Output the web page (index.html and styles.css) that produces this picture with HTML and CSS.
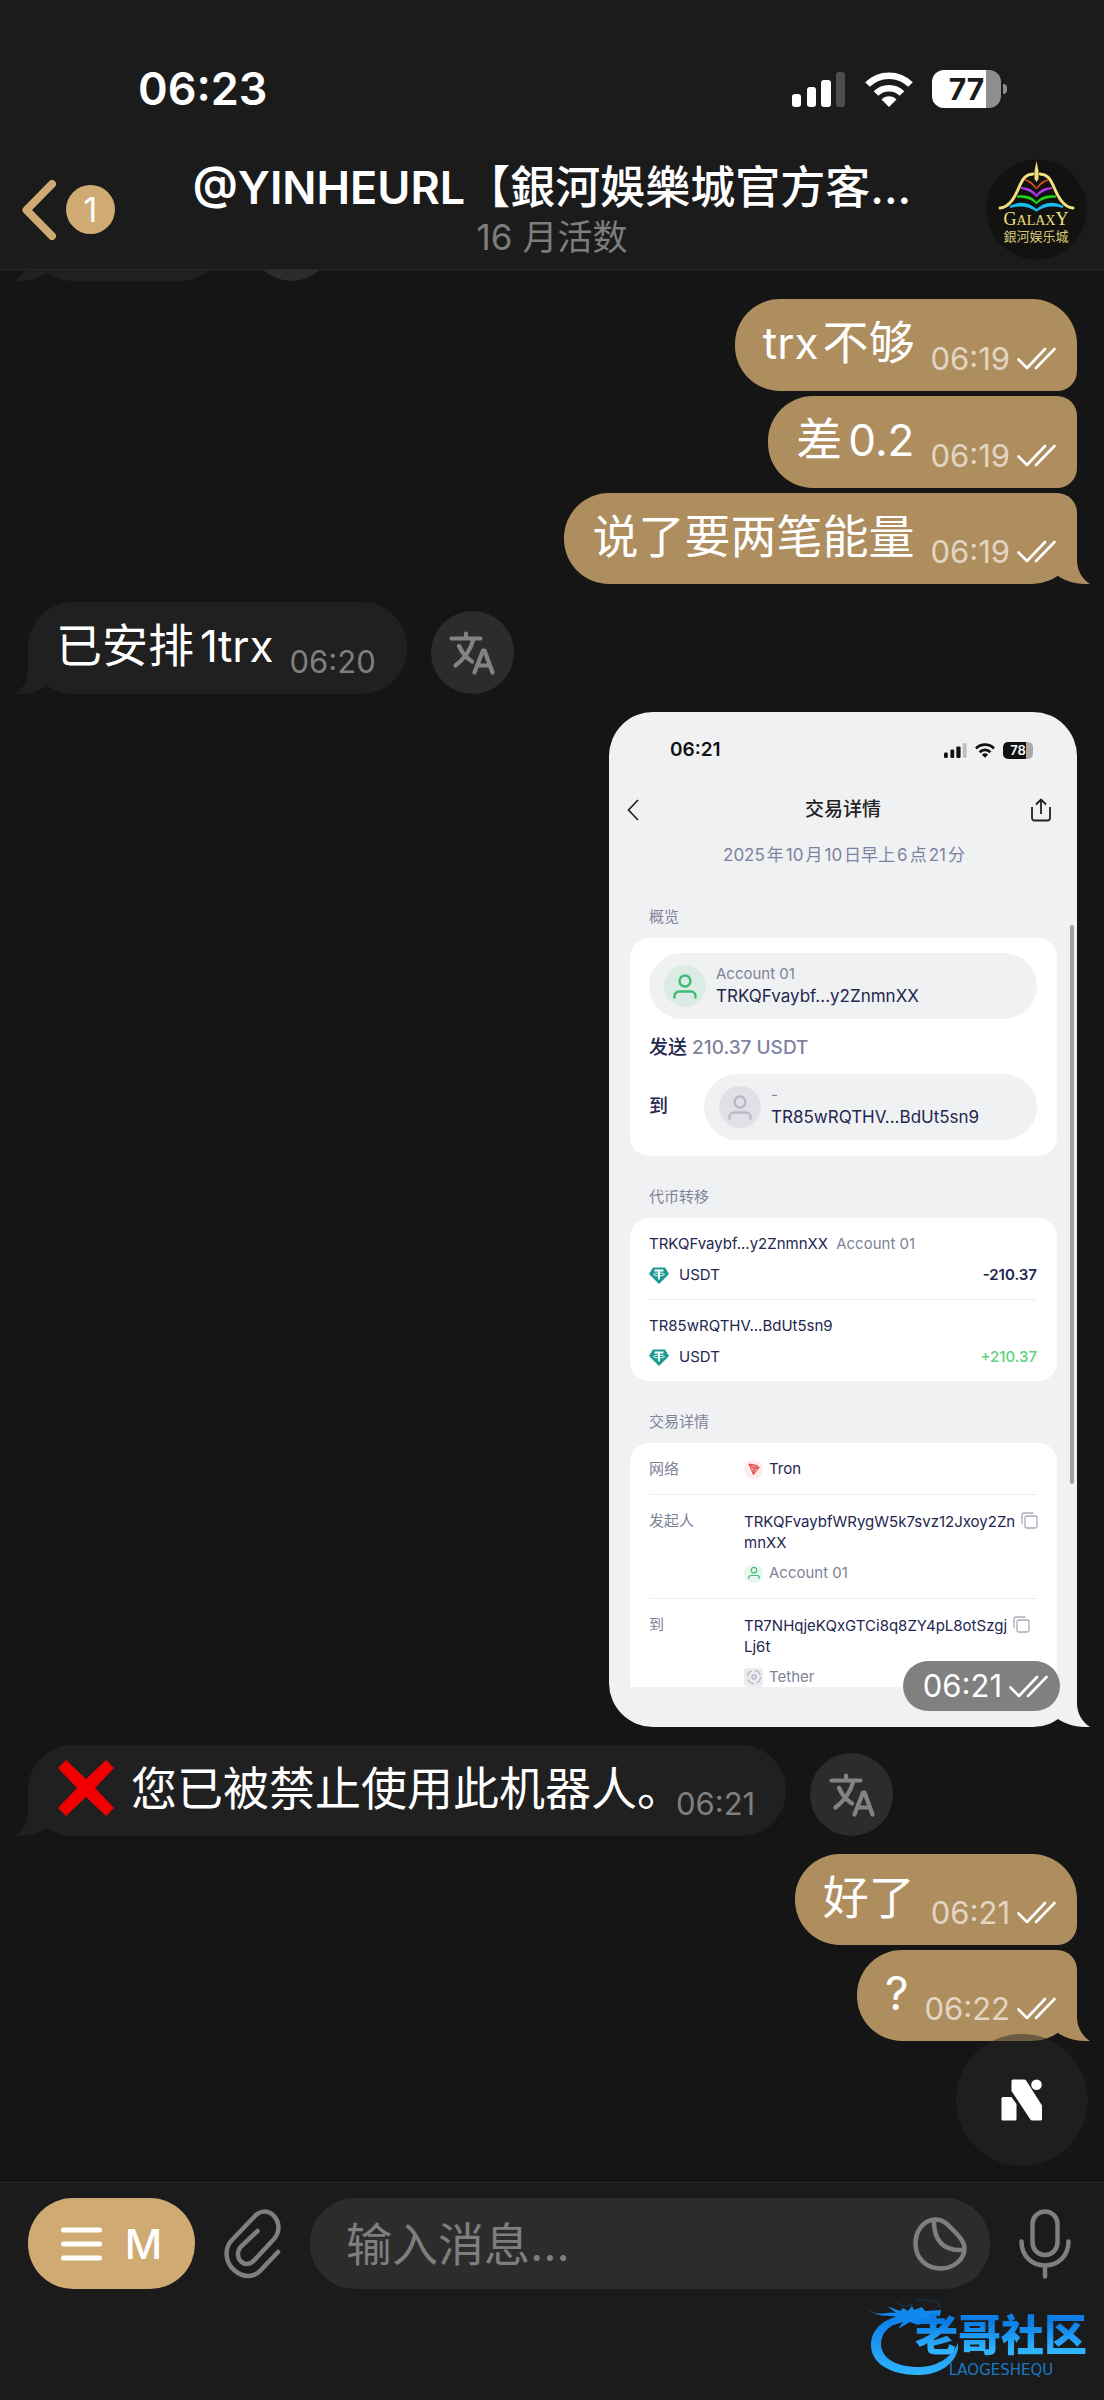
FILE: index.html
```html
<!DOCTYPE html>
<html lang="zh-CN">
  <head>
    <meta charset="UTF-8" />
    <meta name="viewport" content="width=device-width, initial-scale=1.0" />
    <title>Chat</title>
    <link rel="stylesheet" href="styles.css">
  </head>
  <body>
    <!-- shared shapes -->
    <svg class="defs" aria-hidden="true">
      <symbol id="checks" viewBox="0 0 39 23">
        <path d="M1.500 12.500L10 21L28 2M19 21L37.500 2" fill="none" stroke="currentColor" stroke-width="2.600" stroke-linecap="round" stroke-linejoin="round" />
      </symbol>
      <symbol id="tail" viewBox="0 0 46 46">
        <path d="M33 0V22C33 32 38 41 46 46C32 46.500 21 43 14 38L10 10Z" fill="currentColor" />
      </symbol>
      <symbol id="signal" viewBox="0 0 54 35">
        <rect x="0" y="22" width="9" height="13" rx="3" fill="currentColor" />
        <rect x="15" y="15" width="9" height="20" rx="3" fill="currentColor" />
        <rect x="29" y="8" width="10" height="27" rx="3" fill="currentColor" />
        <rect x="44" y="0" width="9" height="35" rx="3" fill="currentColor" opacity="0.220" />
      </symbol>
      <symbol id="wifi" viewBox="0 0 48 35">
        <path d="M24 35L16.500 27.500A10.500 10.500 0 0 1 31.500 27.500Z" fill="currentColor" />
        <path d="M11 21.500A18.500 18.500 0 0 1 37 21.500" fill="none" stroke="currentColor" stroke-width="6.500" />
        <path d="M2.500 12.500A30.500 30.500 0 0 1 45.500 12.500" fill="none" stroke="currentColor" stroke-width="6.500" />
      </symbol>
      <symbol id="translate" viewBox="0 0 46 44">
        <g fill="none" stroke="currentColor" stroke-width="4.200" stroke-linecap="round" stroke-linejoin="round">
          <path d="M2.500 7.500H31.500M17 2.500V7M24.500 8C21.500 19 15 28 6.500 34.500M10 15C13 21.500 17.500 27 23 30.500" />
          <path d="M25.500 41.500L34 19.500H35.500L43.500 41.500M28.500 34.500H41" />
        </g>
      </symbol>
      <symbol id="person" viewBox="0 0 24 24">
        <circle cx="12" cy="6.500" r="5.500" fill="none" stroke="currentColor" stroke-width="2.400" />
        <path d="M1.500 23V21.500A4.500 4.500 0 0 1 6 17H18A4.500 4.500 0 0 1 22.500 21.500V23" fill="none" stroke="currentColor" stroke-width="2.400" stroke-linecap="round" />
      </symbol>
      <symbol id="usdt" viewBox="0 0 20 17">
        <path d="M4 0.500H16L20 7L10 17L0 7Z" fill="#1a9a90" />
        <path d="M5.500 3.500H14.500M10 3.500V12.500" stroke="#fff" stroke-width="1.900" fill="none" />
        <ellipse cx="10" cy="7.500" rx="5.500" ry="1.400" fill="none" stroke="#fff" stroke-width="0.900" />
      </symbol>
      <symbol id="copy" viewBox="0 0 17 17">
        <g fill="none" stroke="currentColor" stroke-width="1.300">
          <rect x="4" y="4" width="12" height="12" rx="2" />
          <path d="M1 12V3A2 2 0 0 1 3 1H12.500" />
        </g>
      </symbol>
    </svg>

    <header class="top">
      <div class="status">
        <span class="clock">06:23</span>
        <div class="status-icons">
          <svg class="ic-signal"><use href="#signal" /></svg>
          <svg class="ic-wifi"><use href="#wifi" /></svg>
          <span class="battery">77</span>
        </div>
      </div>
      <div class="nav">
        <button class="back" type="button" aria-label="Back">
          <svg width="34" height="60" viewBox="0 0 34 60"><path d="M30 4L4.500 30L30 56" fill="none" stroke="#cfab73" stroke-width="8" stroke-linecap="round" stroke-linejoin="round" /></svg>
          <span class="unread">1</span>
        </button>
        <div class="title">
          <h1><span class="latin">@YINHEURL</span>【銀河娛樂城官方客...</h1>
          <p>16 月活数</p>
        </div>
        <a class="avatar" href="#profile" aria-label="Profile">
          <svg width="101" height="101" viewBox="0 0 101 101">
            <circle cx="50.500" cy="50.500" r="50" fill="#121211" />
            <path d="M50.500 2L52.500 12V20L50.500 23L48.500 20V12Z" fill="#f4e07c" />
            <path d="M14 49C24 48 29 38 34 26C37 19 40 15.500 47 15M87 49C77 48 72 38 67 26C64 19 61 15.500 54 15" fill="none" stroke="#f4e07c" stroke-width="3" stroke-linecap="round" />
            <path d="M50.500 30C48 25 45 22 39 21C44 23 47 26 50.500 30C54 26 57 23 62 21C56 22 53 25 50.500 30Z" fill="#ee4d14" stroke="#ee4d14" stroke-width="1" />
            <path d="M50.500 37C47 31 42 29 35 29C42 30.500 46 32 50.500 37C55 32 59 30.500 66 29C59 29 54 31 50.500 37Z" fill="#b73cf0" stroke="#b73cf0" stroke-width="1.600" />
            <path d="M50.500 44C46 38 40 36 31 37.500C40 38 45 39 50.500 44C56 39 61 38 70 37.500C61 36 55 38 50.500 44Z" fill="#22d418" stroke="#22d418" stroke-width="1.800" />
            <path d="M50.500 51.500C44 45 35 42 24 48C35 45 43 46 50.500 51.500C58 46 66 45 77 48C66 42 57 45 50.500 51.500Z" fill="#19bdf2" stroke="#19bdf2" stroke-width="2" />
            <text class="brand" x="50" y="66" text-anchor="middle"><tspan class="brand-cap">G</tspan>ALAX<tspan class="brand-cap">Y</tspan></text>
            <text class="brand-cn" x="50" y="82" text-anchor="middle">銀河娱乐城</text>
          </svg>
        </a>
      </div>
    </header>

    <main class="chat">
      <div class="row in">
        <div class="bubble older"><svg class="tail"><use href="#tail" /></svg></div>
        <span class="translate"></span>
      </div>

      <div class="group">
        <div class="bubble out first"><p><span class="latin">trx</span>不够</p><time>06:19</time><svg class="checks"><use href="#checks" /></svg></div>
        <div class="bubble out mid"><p>差<span class="latin">0.2</span></p><time>06:19</time><svg class="checks"><use href="#checks" /></svg></div>
        <div class="bubble out last"><p>说了要两笔能量</p><time>06:19</time><svg class="checks"><use href="#checks" /></svg><svg class="tail"><use href="#tail" /></svg></div>
      </div>

      <div class="row in">
        <div class="bubble"><p>已安排<span class="latin">1trx</span></p><time>06:20</time><svg class="tail"><use href="#tail" /></svg></div>
        <button class="translate" type="button" aria-label="Translate"><svg width="46" height="44"><use href="#translate" /></svg></button>
      </div>

      <div class="photo">
        <svg class="tail"><use href="#tail" /></svg>
        <section class="receipt">
          <div class="r-status">
            <span>06:21</span>
            <div class="r-icons">
              <svg width="23" height="15"><use href="#signal" /></svg>
              <svg width="20" height="15"><use href="#wifi" /></svg>
              <span class="r-battery">78</span>
            </div>
          </div>
          <div class="r-nav">
            <svg width="28" height="22" viewBox="0 0 28 22"><path d="M11 1L1.500 11L11 21" fill="none" stroke="#222" stroke-width="1.700" /></svg>
            <h2>交易详情</h2>
            <svg width="28" height="24" viewBox="0 0 28 24"><path d="M1 9V20A2.500 2.500 0 0 0 3.500 22.500H16.500A2.500 2.500 0 0 0 19 20V9M10 16V2M5 6.500L10 1.500L15 6.500" fill="none" stroke="#222" stroke-width="1.800" /></svg>
          </div>
          <p class="r-date"><span>2025</span>年<span>10</span>月<span>10</span>日早上<span>6</span>点<span>21</span>分</p>

          <h3>概览</h3>
          <div class="card overview">
            <div class="account">
              <span class="face green"><svg width="24" height="25"><use href="#person" /></svg></span>
              <div><small>Account 01</small><b>TRKQFvaybf...y2ZnmnXX</b></div>
            </div>
            <p class="sent">发送 <span>210.37 USDT</span></p>
            <div class="to">
              <span>到</span>
              <div class="account">
                <span class="face"><svg width="24" height="25"><use href="#person" /></svg></span>
                <div><small>-</small><b>TR85wRQTHV...BdUt5sn9</b></div>
              </div>
            </div>
          </div>

          <h3>代币转移</h3>
          <div class="card">
            <div class="transfer">
              <p>TRKQFvaybf...y2ZnmnXX <small>Account 01</small></p>
              <div class="coin"><svg width="20" height="17"><use href="#usdt" /></svg>USDT<b>-210.37</b></div>
            </div>
            <div class="transfer">
              <p>TR85wRQTHV...BdUt5sn9</p>
              <div class="coin"><svg width="20" height="17"><use href="#usdt" /></svg>USDT<b class="plus">+210.37</b></div>
            </div>
          </div>

          <h3>交易详情</h3>
          <dl class="card details">
            <div class="detail">
              <dt>网络</dt>
              <dd>
                <div class="tag dark">
                  <span class="dot red"><svg width="12" height="12" viewBox="0 0 12 12"><path d="M1 1L9 2.500L11 4.500L5.500 11.500ZM1 1L6.200 5.200L5.500 11.500M6.200 5.200L11 4.500M6.200 5.200L9 2.500" fill="#f2a0a0" stroke="#e2403e" stroke-width="1" stroke-linejoin="round" /></svg></span>
                  Tron
                </div>
              </dd>
            </div>
            <div class="detail">
              <dt>发起人</dt>
              <dd>
                <div class="addr"><span>TRKQFvaybfWRygW5k7svz12Jxoy2Zn<br>mnXX</span><svg width="17" height="17"><use href="#copy" /></svg></div>
                <div class="tag"><span class="dot mint"><svg width="12" height="12"><use href="#person" /></svg></span>Account 01</div>
              </dd>
            </div>
            <div class="detail">
              <dt>到</dt>
              <dd>
                <div class="addr"><span>TR7NHqjeKQxGTCi8q8ZY4pL8otSzgj<br>Lj6t</span><svg width="17" height="17"><use href="#copy" /></svg></div>
                <div class="tag">
                  <span class="dot square"><svg width="16" height="16" viewBox="0 0 16 16"><circle cx="8" cy="8" r="6.500" fill="none" stroke="#b4b5c1" stroke-width="1.300" stroke-dasharray="7.200 3" /><circle cx="8" cy="8" r="2" fill="none" stroke="#b4b5c1" stroke-width="1.500" /></svg></span>
                  Tether
                </div>
              </dd>
            </div>
          </dl>
          <span class="scrollbar"></span>
        </section>
        <div class="stamp"><time>06:21</time><svg class="checks"><use href="#checks" /></svg></div>
      </div>

      <div class="row in">
        <div class="bubble">
          <svg class="cross" viewBox="0 0 56 56"><path d="M8 0L28 19L48 0L56 8L37 28L56 48L48 56L28 37L8 56L0 48L19 28L0 8Z" fill="#f20000" /></svg>
          <p>您已被禁止使用此机器人<span class="stop">。</span></p><time>06:21</time><svg class="tail"><use href="#tail" /></svg>
        </div>
        <button class="translate" type="button" aria-label="Translate"><svg width="46" height="44"><use href="#translate" /></svg></button>
      </div>

      <div class="group">
        <div class="bubble out first"><p>好了</p><time>06:21</time><svg class="checks"><use href="#checks" /></svg></div>
        <div class="bubble out last"><p>?</p><time>06:22</time><svg class="checks"><use href="#checks" /></svg><svg class="tail"><use href="#tail" /></svg></div>
      </div>

      <button class="float" type="button" aria-label="Open assistant">
        <svg width="42" height="42" viewBox="0 0 42 42" fill="#fff">
          <path d="M2 18H10.500L15.500 25V40Q15.500 41.500 14 41.500H2Q0.500 41.500 0.500 40V19.500Q0.500 18 2 18Z" />
          <path d="M12 0.500H23Q24.500 0.500 25.300 1.800L41 26.500V40Q41 41.500 39.500 41.500H31.500Q30 41.500 29.200 40.300L10.500 12V2Q10.500 0.500 12 0.500Z" />
          <circle cx="35.500" cy="5.800" r="5.300" />
        </svg>
      </button>
    </main>

    <footer class="bottom">
      <form class="composer">
        <button class="menu" type="button">
          <svg width="41" height="34" viewBox="0 0 41 34"><path d="M2.500 3H38.500M2.500 17H38.500M2.500 31H38.500" stroke="#fff" stroke-width="5" stroke-linecap="round" /></svg>
          M
        </button>
        <button class="icon" type="button" aria-label="Attach">
          <svg width="57" height="70" viewBox="0 0 57 70"><path d="M54 43L37 61C30 69 19 69 10 61C1 53 0 39 8 31L30 8C36 1 44 1 50 7C56 14 56 23 50 30L30.500 51C26 56 20 56 16.500 52C13 48 13 42 17 37.500L33.500 22" fill="none" stroke="currentColor" stroke-width="4.500" stroke-linecap="round" /></svg>
        </button>
        <div class="field">
          <input type="text" placeholder="输入消息..." aria-label="输入消息" />
          <button class="icon" type="button" aria-label="Stickers">
            <svg width="54" height="54" viewBox="0 0 54 54"><path d="M21 2.500C10 4 2.500 14 2.500 26.500C2.500 41 13 51.500 27.500 51.500C41 51.500 51.500 42 51.500 31C51.500 26 49 22.500 44 17L34 7C30 3.500 26 2 21 2.500ZM21 3C20.500 22 29 34.500 51 33" fill="none" stroke="currentColor" stroke-width="4.500" stroke-linejoin="round" /></svg>
          </button>
        </div>
        <button class="icon" type="button" aria-label="Voice message">
          <svg width="52" height="70" viewBox="0 0 52 70"><path d="M26 2.500A12.500 12.500 0 0 1 38.500 15V33.500A12.500 12.500 0 0 1 13.500 33.500V15A12.500 12.500 0 0 1 26 2.500ZM2.500 32.500C2.500 47 13 56.500 26 56.500C39 56.500 49.500 47 49.500 32.500M26 57V67.500" fill="none" stroke="currentColor" stroke-width="4.500" stroke-linecap="round" /></svg>
        </button>
      </form>

      <a class="community" href="#community">
        <svg width="92" height="80" viewBox="0 0 92 80">
          <defs>
            <linearGradient id="blue" x1="0" y1="0" x2="0" y2="1"><stop offset="0" stop-color="#0c7de6" /><stop offset="1" stop-color="#2fb4ff" /></linearGradient>
          </defs>
          <path d="M36 17C14 20 2 32 2 47C2 65 21 77 49 77C70 77 86 66 89 51V45C82 60 68 69 50 69C27 69 12 60 12 46C12 34 21 26 38 22Z" fill="url(#blue)" />
          <path d="M0 12L6 15C15 17 20 13 27 15L18 8L31 13L34 10L39 13L43 8L45 12L53 9L56 13L72 12L71 18L60 17L69 22L68 27L57 23L49 27L41 24L29 31L34 24L25 27L31 20C22 16 12 21 0 12Z" fill="#0f87ec" />
          <path d="M28 4C32 9 38 9 44 6M47 2C58 2 70 1 72 11" fill="none" stroke="#134064" stroke-width="1.500" opacity="0.500" />
        </svg>
        <span class="names"><strong>老哥社区</strong><small>LAOGESHEQU</small></span>
      </a>
    </footer>
  </body>
</html>
```

FILE: styles.css
```css
* {
  box-sizing: border-box;
}

body {
  display: flex;
  flex-direction: column;
  height: 100vh;
  margin: 0;
  background-color: #151515;
  color: #fff;
  font-family: Inter, "Noto Sans CJK SC", sans-serif;
}

h1,
h2,
h3,
p,
dl,
dd {
  margin: 0;
}

button {
  padding: 0;
  border: none;
  background: none;
  color: inherit;
  font-family: inherit;
  cursor: pointer;
}

svg {
  display: block;
  flex: none;
}

.defs {
  position: absolute;
  width: 0;
  height: 0;
}

/* header */
.top {
  background-color: #1b1b1b;
  border-bottom: 1px solid #272727;
  padding-bottom: 9px;
}

.status {
  display: flex;
  justify-content: space-between;
  align-items: center;
  padding: 62px 103px 0 138px;
}

.clock {
  font-size: 45px;
  line-height: 54px;
  font-weight: 600;
}

.status-icons {
  display: flex;
  align-items: center;
  gap: 19px;
}

.ic-signal {
  width: 54px;
  height: 35px;
}

.ic-wifi {
  width: 48px;
  height: 35px;
}

.battery {
  position: relative;
  width: 69px;
  border-radius: 12px;
  background: linear-gradient(to right, #fff 78%, #8e8e8e 78%);
  color: #1b1b1b;
  font-size: 30px;
  line-height: 38px;
  font-weight: 700;
  text-align: center;
}

.battery::after {
  content: "";
  position: absolute;
  top: 14px;
  right: -6px;
  width: 4px;
  height: 10px;
  border-radius: 0 4px 4px 0;
  background-color: #8e8e8e;
}

.nav {
  display: grid;
  grid-template-columns: 101px minmax(0, 1fr) 101px;
  align-items: center;
  margin-top: 43px;
  padding: 0 17px;
}

.back {
  display: flex;
  align-items: center;
  gap: 10px;
  padding-left: 5px;
}

.unread {
  width: 49px;
  border-radius: 50%;
  background-color: #cfab73;
  font-size: 34px;
  line-height: 49px;
}

.title {
  text-align: center;
  white-space: nowrap;
}

.title h1 {
  font-size: 45px;
  line-height: 54px;
  font-weight: 500;
}

.title h1 .latin {
  font-weight: 600;
}

.title p {
  color: #7d7d7d;
  font-size: 35px;
  line-height: 44px;
}

.brand {
  font: 14px "Liberation Serif", serif;
  fill: #f4e07c;
}

.brand-cap {
  font-size: 18px;
}

.brand-cn {
  font: 13px "Noto Sans CJK SC", sans-serif;
  fill: #d9c872;
}

/* messages */
.chat {
  position: relative;
  flex: 1;
  min-height: 0;
  display: flex;
  flex-direction: column;
  justify-content: flex-end;
  gap: 18px;
  padding: 0 27px 141px 28px;
  overflow: hidden;
}

.row {
  display: flex;
  align-items: flex-end;
  gap: 24px;
}

.group {
  display: flex;
  flex-direction: column;
  align-items: flex-end;
  gap: 5px;
}

.bubble {
  position: relative;
  display: flex;
  align-items: flex-end;
  padding: 15px 31px 14px 28px;
  border-radius: 45px;
  background-color: #202020;
  white-space: nowrap;
}

.bubble p {
  margin: 0 16px 6px 0;
  font-size: 46px;
  line-height: 56px;
}

.bubble .latin {
  font-size: 44px;
}

.bubble .latin:first-child:not(:only-child),
.out.first .latin {
  margin-right: 4px;
}

.out.mid .latin,
.in .latin {
  margin-left: 6px;
}

.bubble time {
  color: #7f7f7f;
  font-size: 31px;
  line-height: 36px;
}

.bubble.older {
  width: 198px;
  height: 91px;
}

.out {
  padding-right: 21px;
  background-color: #ae8e5f;
}

.out time {
  color: #e2d5c2;
}

.out.first {
  border-radius: 45px 45px 20px 45px;
}

.out.mid {
  border-radius: 45px 20px 20px 45px;
}

.out.last {
  border-radius: 45px 20px 45px 45px;
}

.checks {
  width: 39px;
  height: 23px;
  margin: 0 0 7px 7px;
  color: #fff;
}

.tail {
  position: absolute;
  right: -13px;
  bottom: 0;
  width: 46px;
  height: 46px;
  color: #ae8e5f;
}

.in .tail {
  right: auto;
  left: -13px;
  color: #202020;
  transform: scaleX(-1);
}

.cross {
  width: 56px;
  height: 56px;
  margin: 0 17px 6px 2px;
}

.stop {
  font-feature-settings: "halt";
}

.translate {
  display: grid;
  place-items: center;
  width: 83px;
  height: 83px;
  border-radius: 50%;
  background-color: #2c2c2c;
  color: #838383;
}

/* receipt picture */
.photo {
  position: relative;
  align-self: flex-end;
  width: 100%;
  max-width: 468px;
}

.photo .tail {
  color: #f0f1f3;
}

.receipt {
  position: relative;
  padding-bottom: 40px;
  border-radius: 44px;
  background-color: #f0f1f3;
  color: #23264f;
  font-size: 15px;
  line-height: 20px;
}

.r-status {
  display: flex;
  justify-content: space-between;
  padding: 26px 44px 0 61px;
  color: #111;
  font-size: 19px;
  line-height: 24px;
  font-weight: 600;
}

.r-icons {
  display: flex;
  align-items: center;
  gap: 8px;
}

.r-battery {
  width: 30px;
  border-radius: 5px;
  background: linear-gradient(to right, #111 78%, #aaa 78%);
  color: #fff;
  font-size: 13px;
  line-height: 17px;
  text-align: center;
}

.r-nav {
  display: flex;
  justify-content: space-between;
  align-items: center;
  margin-top: 34px;
  padding: 0 18px;
}

.r-nav h2 {
  color: #222;
  font-size: 19px;
  line-height: 28px;
  font-weight: 500;
}

.r-date {
  margin-top: 21px;
  color: #7e82a0;
  font-size: 17px;
  text-align: center;
}

.r-date span {
  margin: 0 2px;
}

.receipt h3 {
  margin: 31px 40px 11px;
  color: #7f8299;
  font-size: 15px;
  font-weight: 400;
}

.receipt .r-date + h3 {
  margin-top: 42px;
}

.receipt small {
  color: #7f8299;
  font-size: 15px;
}

.card {
  margin: 0 20px 0 21px;
  padding: 0 20px 0 19px;
  border-radius: 19px;
  background-color: #fff;
}

.overview {
  padding-top: 15px;
  padding-bottom: 16px;
}

.account {
  flex: 1;
  display: flex;
  align-items: center;
  gap: 10px;
  height: 66px;
  padding: 0 15px;
  border-radius: 33px;
  background-color: #f0f1f3;
}

.account small,
.account b {
  display: block;
}

.account b {
  font-size: 17px;
  line-height: 24px;
  font-weight: 400;
}

.face {
  display: grid;
  place-items: center;
  width: 42px;
  height: 42px;
  border-radius: 50%;
  background-color: #e0e1e7;
  color: #b9bac7;
}

.face.green {
  background-color: #dcece4;
  color: #3dbb74;
}

.sent {
  margin: 15px 0 12px;
  font-size: 19px;
  line-height: 28px;
  font-weight: 500;
}

.sent span {
  color: #7f82a0;
}

.to {
  display: flex;
  align-items: center;
  gap: 36px;
  font-size: 19px;
  font-weight: 500;
}

.to .account {
  font-weight: 400;
}

.transfer {
  padding: 16px 0 14px;
}

.transfer + .transfer {
  border-top: 1px solid #ededf1;
}

.transfer small {
  margin-left: 4px;
}

.coin {
  display: flex;
  align-items: center;
  gap: 10px;
  margin-top: 11px;
}

.coin b {
  margin-left: auto;
  font-weight: 600;
}

.coin .plus {
  color: #5fd17c;
  font-weight: 500;
}

.details {
  border-radius: 19px 19px 0 0;
}

.detail {
  display: grid;
  grid-template-columns: 95px 1fr;
  padding: 16px 0 15px;
  border-bottom: 1px solid #ededf1;
}

.detail:last-child {
  padding-bottom: 0;
  border-bottom: none;
}

.detail dt {
  color: #7f8299;
}

.addr {
  display: flex;
  gap: 6px;
  margin-bottom: 10px;
  line-height: 21px;
  white-space: nowrap;
}

.addr svg {
  margin-top: 1px;
  color: #a9abb9;
}

.tag {
  display: flex;
  align-items: center;
  gap: 6px;
  color: #7f8299;
}

.tag.dark {
  color: #23264f;
}

.dot {
  display: grid;
  place-items: center;
  width: 19px;
  height: 19px;
  border-radius: 50%;
}

.dot.red {
  background-color: #fdecec;
}

.dot.mint {
  background-color: #e8f7ee;
  color: #3dbb74;
}

.dot.square {
  border-radius: 4px;
  background-color: #ececf0;
}

.scrollbar {
  position: absolute;
  top: 213px;
  right: 3px;
  width: 4px;
  height: 559px;
  border-radius: 2px;
  background-color: #a0a1a3;
}

.stamp {
  position: absolute;
  right: 17px;
  bottom: 16px;
  display: flex;
  align-items: center;
  padding: 0 12px 0 20px;
  border-radius: 25px;
  background-color: #808080;
  font-size: 31px;
  line-height: 50px;
}

.stamp .checks {
  margin-bottom: 0;
}

.float {
  position: absolute;
  right: 16px;
  bottom: 16px;
  display: grid;
  place-items: center;
  width: 132px;
  height: 132px;
  border-radius: 50%;
  background-color: rgba(39, 39, 39, 0.5);
}

/* footer */
.bottom {
  display: flex;
  flex-direction: column;
  border-top: 1px solid #272727;
  padding: 15px 0 22px;
  background-color: #1b1b1b;
}

.composer {
  display: flex;
  align-items: center;
  gap: 29px;
  padding: 0 33px 0 28px;
}

.menu {
  display: flex;
  align-items: center;
  justify-content: center;
  gap: 23px;
  width: 167px;
  height: 91px;
  border-radius: 45px;
  background-color: #cfab73;
  font-size: 41px;
  font-weight: 500;
}

.icon {
  color: #7f7f7f;
}

.field {
  flex: 1;
  min-width: 0;
  display: flex;
  align-items: center;
  height: 91px;
  padding: 0 23px 0 36px;
  border-radius: 45px;
  background-color: #2c2c2c;
}

.field input {
  flex: 1;
  min-width: 0;
  padding: 0;
  border: none;
  outline: none;
  background: none;
  color: #fff;
  font-family: inherit;
  font-size: 46px;
  line-height: 56px;
}

.field input::placeholder {
  color: #7e7e7e;
}

.community {
  align-self: flex-end;
  display: flex;
  align-items: flex-end;
  margin: 9px 17px 0 0;
  color: #1e96f5;
  text-decoration: none;
}

.names {
  display: flex;
  flex-direction: column;
  align-items: center;
  gap: 2px;
  margin-left: -46px;
}

.names strong {
  background: linear-gradient(#0c7de6 25%, #2fb4ff 80%);
  background-clip: text;
  color: transparent;
  font-size: 43px;
  line-height: 50px;
  font-weight: 900;
}

.names small {
  font-family: "DejaVu Sans", sans-serif;
  color: #1879c4;
  font-size: 15px;
  line-height: 16px;
}
```
